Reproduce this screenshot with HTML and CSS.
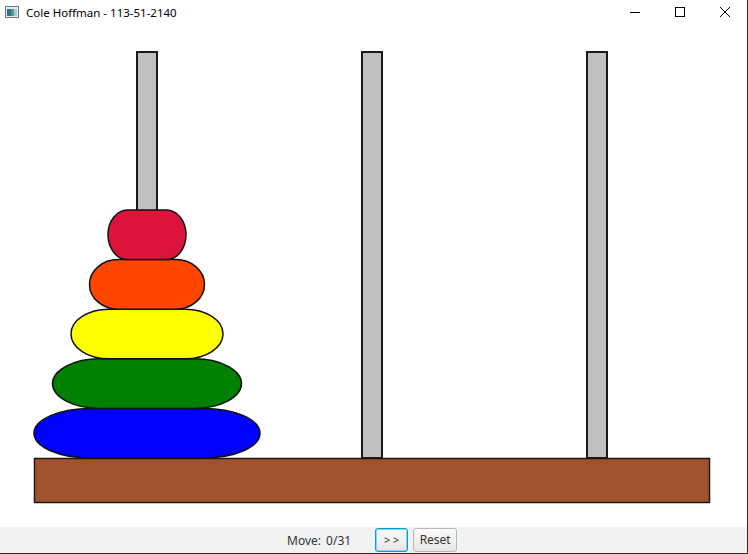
FILE: index.html
```html
<!DOCTYPE html>
<html>
<head>
<meta charset="utf-8">
<link rel="stylesheet" href="styles.css">
</head>
<body>
<div class="window">
  <div class="titlebar">
    <svg class="app-icon" width="14" height="12" viewBox="0 0 14 12">
      <rect x="0.5" y="0.5" width="13" height="11" fill="#e8ecef" stroke="#6d7b86"/>
      <rect x="2" y="3" width="4" height="7" fill="#2f6f8f"/>
      <rect x="6" y="3" width="3" height="7" fill="#4f9a8a"/>
      <rect x="9" y="3" width="3" height="7" fill="#b7c6cf"/>
    </svg>
    <span class="title">Cole Hoffman - 113-51-2140</span>
    <div class="controls">
      <span class="ctl"><svg width="12" height="12" viewBox="0 0 12 12"><path d="M1 6.5H11" stroke="#000" stroke-width="1"/></svg></span>
      <span class="ctl"><svg width="12" height="12" viewBox="0 0 12 12"><rect x="1.5" y="1.5" width="9" height="9" fill="none" stroke="#000" stroke-width="1"/></svg></span>
      <span class="ctl"><svg width="12" height="12" viewBox="0 0 12 12"><path d="M1 1L11 11M11 1L1 11" stroke="#000" stroke-width="1"/></svg></span>
    </div>
  </div>
  <svg class="scene" width="747" height="501" viewBox="0 26 747 501">
    <g fill="#c0c0c0" stroke="#1a1a1a" stroke-width="2">
      <rect x="137" y="52" width="20" height="406"/>
      <rect x="362" y="52" width="20" height="406"/>
      <rect x="587" y="52" width="20" height="406"/>
    </g>
    <rect x="34.5" y="458.5" width="675" height="44" fill="#a0522d" stroke="#1a1a1a" stroke-width="1.5"/>
    <g stroke="#111" stroke-width="1.5">
      <rect x="34" y="408.4" width="226" height="49.6" rx="56.5" ry="24.8" fill="#0000ff"/>
      <rect x="52.5" y="358.8" width="189" height="49.6" rx="47.25" ry="24.8" fill="#008000"/>
      <rect x="71" y="309.2" width="152" height="49.6" rx="38" ry="24.8" fill="#ffff00"/>
      <rect x="89.5" y="259.6" width="115" height="49.6" rx="28.75" ry="24.8" fill="#ff4500"/>
      <rect x="108" y="210" width="78" height="49.6" rx="19.5" ry="24.8" fill="#dc143c"/>
    </g>
  </svg>
  <div class="bottombar">
    <span class="move">Move: 0/31</span>
    <button class="btn focused">&gt; &gt;</button>
    <button class="btn reset">Reset</button>
  </div>
</div>
</body>
</html>
```
FILE: styles.css
```css
html, body {
  margin: 0;
  padding: 0;
  background: #ffffff;
}
body {
  font-family: "Noto Sans", "Open Sans", sans-serif;
}
.window {
  width: 747px;
  height: 553px;
  border-right: 1px solid #2b2b2b;
  border-bottom: 1px solid #2b2b2b;
  display: flex;
  flex-direction: column;
  background: #ffffff;
  overflow: hidden;
}
.titlebar {
  height: 26px;
  display: flex;
  align-items: center;
  padding-left: 5px;
  padding-bottom: 2px;
  box-sizing: border-box;
  flex: none;
}
.app-icon {
  display: block;
  margin-right: 7px;
}
.title {
  font-size: 11.5px;
  color: #000;
  flex: 1;
}
.controls {
  display: flex;
  height: 100%;
  align-items: center;
}
.ctl {
  width: 45px;
  display: flex;
  justify-content: center;
  align-items: center;
  height: 100%;
}
.scene {
  display: block;
  flex: none;
}
.bottombar {
  flex: 1;
  background: #f2f2f2;
  display: flex;
  align-items: center;
  padding-left: 287px;
  box-sizing: border-box;
}
.move {
  font-size: 12px;
  color: #333;
  margin-right: 24px;
  word-spacing: 2px;
}
.btn {
  font-family: "Noto Sans", "Open Sans", sans-serif;
  font-size: 12px;
  color: #333;
  height: 24px;
  padding: 0;
  border: 1px solid #b8b8b8;
  border-radius: 3px;
  background: linear-gradient(#fbfbfb, #e6e6e6);
  margin: 0 5px 0 0;
  line-height: 20px;
}
.btn.focused {
  width: 33px;
  border: 1px solid #039ed3;
  box-shadow: inset 0 0 0 1px #8ed2ec;
  font-size: 11px;
}
.btn.reset {
  width: 44px;
}
```
